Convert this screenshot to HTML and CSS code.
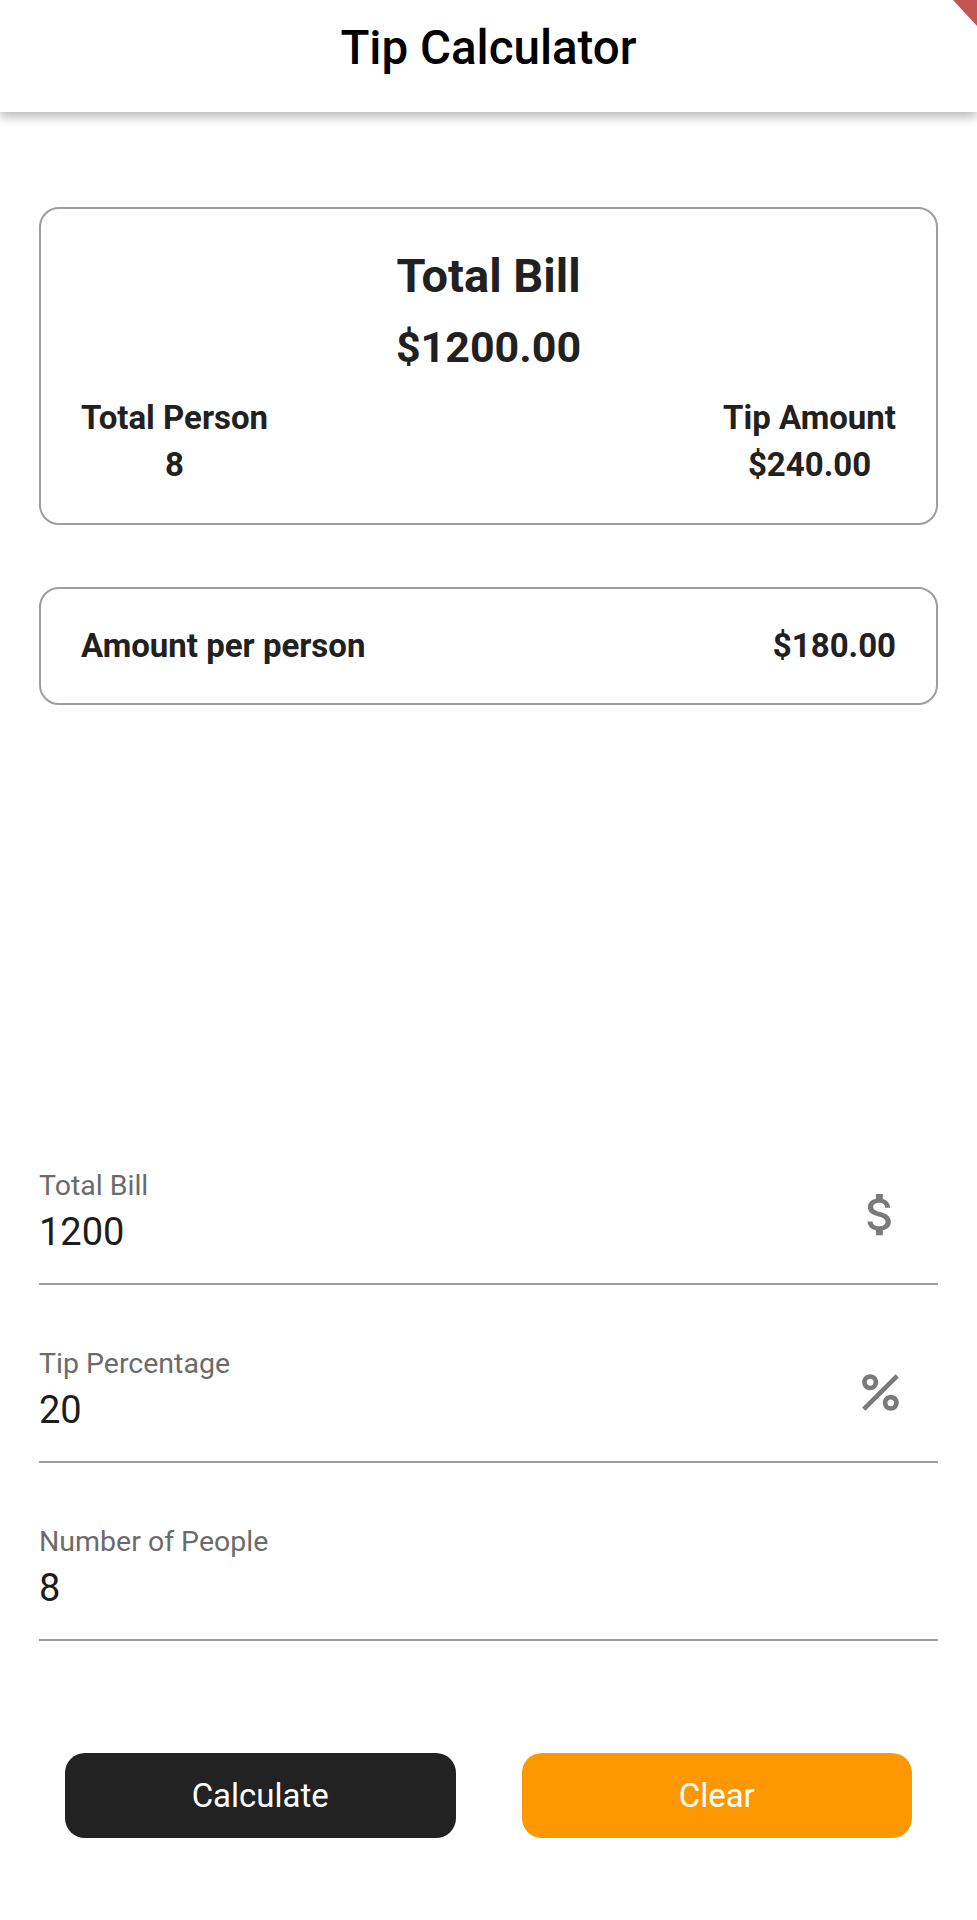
FILE: index.html
```html
<!DOCTYPE html>
<html lang="en">
<head>
<meta charset="utf-8">
<title>Tip Calculator</title>
<link rel="stylesheet" href="styles.css">
</head>
<body>
<header class="app-bar">
  <h1 class="app-title">Tip Calculator</h1>
  <div class="debug-banner"></div>
</header>
<main class="content">
  <section class="card summary">
    <h2 class="summary-title">Total Bill</h2>
    <div class="summary-total">$1200.00</div>
    <div class="summary-row">
      <div class="stat">
        <div class="stat-label">Total Person</div>
        <div class="stat-value">8</div>
      </div>
      <div class="stat">
        <div class="stat-label">Tip Amount</div>
        <div class="stat-value">$240.00</div>
      </div>
    </div>
  </section>
  <section class="card per-person">
    <span>Amount per person</span>
    <span>$180.00</span>
  </section>

  <form class="fields">
    <label class="field first">
      <span class="field-label">Total Bill</span>
      <span class="field-value">1200</span>
      <svg class="field-icon" viewBox="0 0 24 24"><path d="M11.8 10.9c-2.27-.59-3-1.2-3-2.15 0-1.09 1.01-1.85 2.7-1.85 1.78 0 2.440.85 2.5 2.1h2.21c-.07-1.72-1.12-3.3-3.21-3.81V3h-3v2.16c-1.94.42-3.5 1.68-3.5 3.61 0 2.31 1.91 3.46 4.7 4.13 2.5.6 3 1.48 3 2.41 0 .69-.49 1.79-2.7 1.79-2.06 0-2.87-.92-2.98-2.1h-2.2c.12 2.19 1.76 3.42 3.68 3.83V21h3v-2.15c1.95-.37 3.5-1.5 3.5-3.55 0-2.84-2.43-3.81-4.7-4.4z"/></svg>
    </label>
    <label class="field">
      <span class="field-label">Tip Percentage</span>
      <span class="field-value">20</span>
      <svg class="field-icon" viewBox="0 0 24 24"><path d="M7.5 11C9.43 11 11 9.43 11 7.5S9.43 4 7.5 4 4 5.57 4 7.5 5.57 11 7.5 11zm0-5C8.33 6 9 6.67 9 7.5S8.33 9 7.5 9 6 8.33 6 7.5 6.67 6 7.5 6zM4.0025 18.5832 18.59 3.996l1.4142 1.4142L5.4167 19.9974zM16.5 13c-1.93 0-3.5 1.57-3.5 3.5s1.57 3.5 3.5 3.5 3.5-1.570 3.5-3.5-1.57-3.5-3.5-3.5zm0 5c-.83 0-1.5-.67-1.5-1.5s.67-1.5 1.5-1.5 1.5.67 1.5 1.5-.67 1.5-1.5 1.5z"/></svg>
    </label>
    <label class="field">
      <span class="field-label">Number of People</span>
      <span class="field-value">8</span>
    </label>
  </form>
</main>
<div class="actions">
  <button class="btn btn-dark" type="button">Calculate</button>
  <button class="btn btn-orange" type="button">Clear</button>
</div>
</body>
</html>
```

FILE: styles.css
```css
* { box-sizing: border-box; }

html, body {
  margin: 0;
  padding: 0;
  background: #ffffff;
  font-family: Roboto, "Noto Sans", Arial, sans-serif;
  color: #212121;
}

.app-bar {
  position: relative;
  height: 112px;
  padding-top: 24px;
  background: #ffffff;
  box-shadow: 0 5px 10px rgba(0, 0, 0, 0.28);
  overflow: hidden;
}

.app-title {
  margin: 0;
  text-align: center;
  font-size: 47.5px;
  line-height: 48px;
  font-weight: 500;
  color: #000000;
}

.debug-banner {
  position: absolute;
  top: 0;
  right: 0;
  width: 24px;
  height: 26px;
  background: #c25454;
  clip-path: polygon(0 0, 100% 0, 100% 100%);
}

.content {
  padding: 95px 39px 0;
}

.card {
  border: 2px solid #9e9e9e;
  border-radius: 20px;
  background: #ffffff;
}

.summary {
  padding: 43px 40px 41px;
  text-align: center;
  font-weight: 700;
}

.summary-title {
  margin: 0;
  font-size: 47px;
  line-height: 48px;
  font-weight: 700;
}

.summary-total {
  margin-top: 25px;
  font-size: 43px;
  line-height: 44px;
}

.summary-row {
  margin-top: 32px;
  display: flex;
  justify-content: space-between;
}

.stat {
  display: flex;
  flex-direction: column;
  align-items: center;
  gap: 13px;
  font-size: 33px;
  line-height: 34px;
}

.per-person {
  margin-top: 62px;
  padding: 40px 40px;
  display: flex;
  justify-content: space-between;
  font-size: 33px;
  line-height: 34px;
  font-weight: 700;
}

.fields {
  margin: 0;
  padding-top: 466px;
}

.field {
  display: grid;
  grid-template-columns: 1fr auto;
  grid-template-rows: auto auto;
  row-gap: 13px;
  margin-top: 64px;
  padding-bottom: 31px;
  border-bottom: 2px solid #9e9e9e;
}

.field.first { margin-top: 0; }

.field-label {
  grid-column: 1;
  font-size: 28.5px;
  line-height: 29px;
  color: #6b6b6b;
}

.field-value {
  grid-column: 1;
  font-size: 38px;
  line-height: 39px;
  color: #1c1c1c;
}

.field-icon {
  grid-column: 2;
  grid-row: 1 / span 2;
  align-self: center;
  width: 55px;
  height: 55px;
  margin-top: 5px;
  margin-right: 30px;
  fill: #7a7a7a;
}

.actions {
  display: flex;
  gap: 66px;
  padding: 112px 65px 0;
}

.btn {
  flex: 1;
  height: 85px;
  border: none;
  border-radius: 20px;
  font-family: Roboto, "Noto Sans", Arial, sans-serif;
  font-size: 33px;
  color: #ffffff;
  padding: 0;
}

.btn-dark { background: #222222; }
.btn-orange { background: #ff9800; }
```
